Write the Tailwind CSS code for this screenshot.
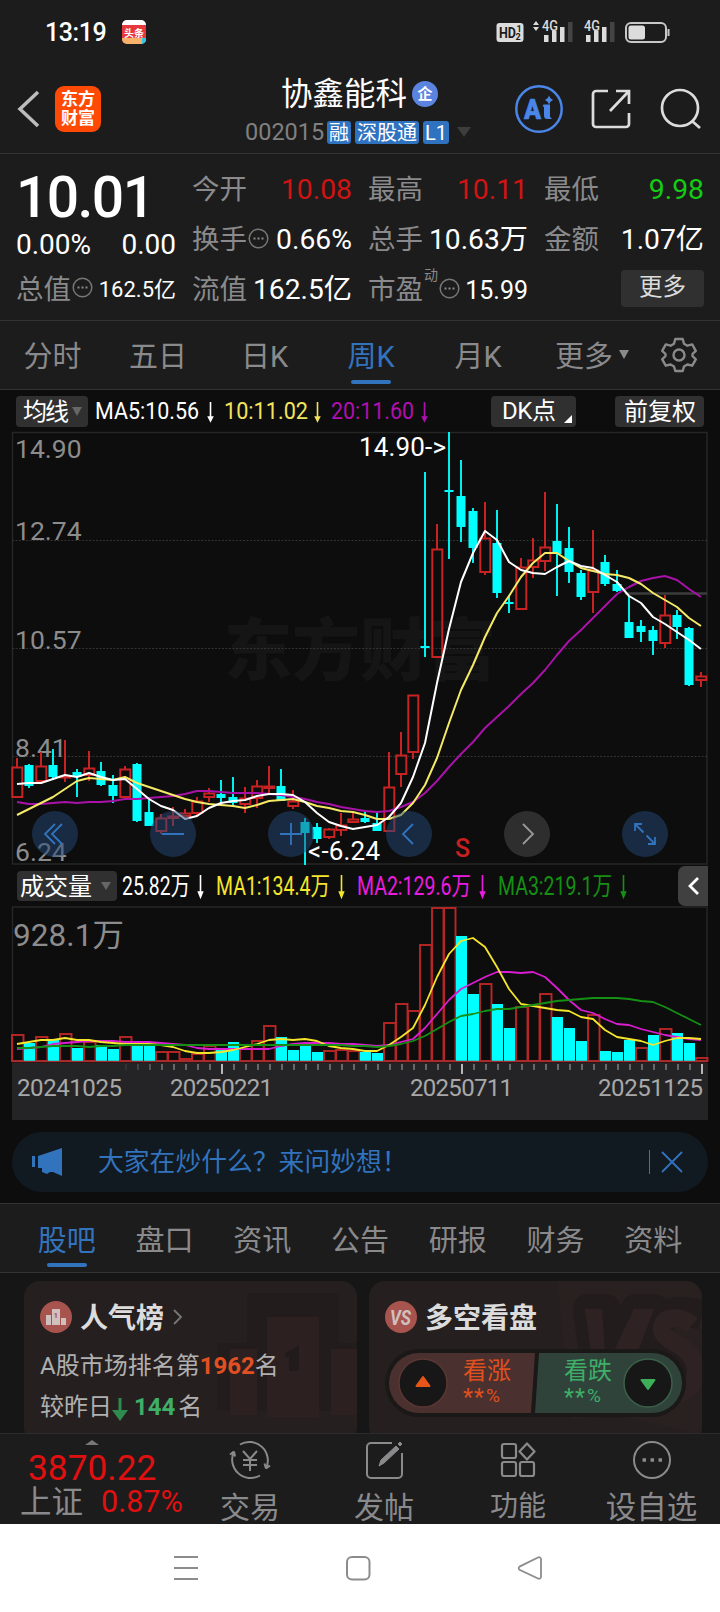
<!DOCTYPE html>
<html lang="zh-CN">
<head>
    <meta charset="UTF-8">
    <meta name="viewport" content="width=device-width, initial-scale=1.0">
    <title>协鑫能科 002015</title>
    <script src="https://cdn.jsdelivr.net/npm/@tailwindcss/browser@4"></script>
</head>
<body class="w-[720px] h-[1612px] overflow-hidden bg-[#0d0d0d] text-white font-['Roboto','Noto_Sans_CJK_SC',sans-serif]">
<div class="flex flex-col h-[1612px]">

    <!-- Statusleiste -->
    <div class="h-16 shrink-0 bg-[#1c1c1c] flex items-center pl-[45px] pr-[49px]">
        <span class="text-[25px] leading-none font-medium w-[63px] tracking-[-0.4px] pt-px">13:19</span>
        <svg class="ml-[14px]" width="24" height="24" viewBox="0 0 24 24">
            <rect width="24" height="24" rx="5" fill="#e8383d"/>
            <path d="M0 5a5 5 0 0 1 5-5h14a5 5 0 0 1 5 5z" fill="#fff"/>
            <path d="M0 18h24v1a5 5 0 0 1-5 5H5a5 5 0 0 1-5-5z" fill="#f6b26b"/>
            <path d="M20 18h4v1a5 5 0 0 1-4 5z" fill="#34c3e8"/>
            <text x="2" y="16.5" font-size="10" font-weight="700" fill="#fff">头条</text>
        </svg>
        <svg class="ml-auto" width="175" height="30" viewBox="497 17 175 30">
            <rect x="497.500" y="23" width="27" height="19" rx="3" fill="#dcdcdc"/>
            <text x="500" y="38" font-size="14" font-weight="700" fill="#1c1c1c" textLength="17" lengthAdjust="spacingAndGlyphs">HD</text>
            <text x="517.500" y="32" font-size="9" font-weight="700" fill="#1c1c1c">1</text>
            <text x="516.500" y="40" font-size="9" font-weight="700" fill="#1c1c1c">2</text>
            <path d="M534 25l3-4 3 4zM534 27l3 4 3-4z" fill="#dcdcdc"/>
            <text x="543" y="31" font-size="14" font-weight="500" fill="#dcdcdc" textLength="16" lengthAdjust="spacingAndGlyphs">4G</text>
            <path d="M545 35h4.500v7h-4.500zM553 31h4.500v11h-4.500zM561 27h4.500v15h-4.500z" fill="#dcdcdc"/>
            <path d="M569 22h4.500v20h-4.500z" fill="#444"/>
            <text x="585" y="31" font-size="14" font-weight="500" fill="#dcdcdc" textLength="16" lengthAdjust="spacingAndGlyphs">4G</text>
            <path d="M587 35h4.500v7h-4.500zM595 31h4.500v11h-4.500zM603 27h4.500v15h-4.500z" fill="#dcdcdc"/>
            <path d="M611 22h4.500v20h-4.500z" fill="#444"/>
            <rect x="627" y="23" width="40" height="19" rx="5" fill="none" stroke="#c8c8c8" stroke-width="2"/>
            <rect x="629.500" y="25.500" width="16.500" height="14" rx="2.500" fill="#dcdcdc"/>
            <path d="M669.500 29v7" stroke="#c8c8c8" stroke-width="2"/>
        </svg>
    </div>

    <!-- Kopfzeile -->
    <div class="h-[90px] shrink-0 bg-[#1c1c1c] border-b border-[#333] flex">
        <div class="w-[245px] flex items-center pl-[17px]">
            <svg width="24" height="38" viewBox="0 0 24 38" fill="none" stroke="#bdbdbd" stroke-width="3.500"><path d="M21 2L3 19l18 17"/></svg>
            <div class="ml-[14px] size-[46px] rounded-[9px] bg-[#ff4a05] font-bold text-[17px] leading-[19px] flex flex-col items-center justify-center"><span>东方</span><span>财富</span></div>
        </div>
        <div class="w-[230px]">
            <div class="flex items-center pl-[36px] pt-[12px] h-[50px]">
                <span class="text-[31.5px] leading-none">协鑫能科</span>
                <span class="ml-[5px] mt-[-2px] size-[26px] rounded-full bg-[#5b84e0] text-[15px] font-bold flex items-center justify-center">企</span>
            </div>
            <div class="flex items-center h-[34px] leading-none pt-[3px]">
                <span class="text-[23.5px] text-[#808080] w-[82px]">002015</span>
                <span class="bg-[#2f72c0] rounded-[3px] w-[24px] h-[23px] text-[20px] flex items-center justify-center">融</span>
                <span class="ml-[4px] bg-[#2f72c0] rounded-[3px] w-[64px] h-[23px] text-[20px] flex items-center justify-center">深股通</span>
                <span class="ml-[4px] bg-[#2f72c0] rounded-[3px] w-[26px] h-[23px] text-[20px] flex items-center justify-center">L1</span>
                <svg class="ml-[8px] mt-[-2px]" width="14" height="10" viewBox="0 0 14 10"><path d="M0 0h14l-7 10z" fill="#3d3d3d"/></svg>
            </div>
        </div>
        <div class="flex-1 flex items-center pl-[40px]">
            <svg width="48" height="48" viewBox="0 0 48 48">
                <circle cx="24" cy="24" r="22.700" fill="none" stroke="#4a86e8" stroke-width="2.500"/>
                <text x="9" y="33.500" font-size="28" font-weight="900" fill="#4a86e8" stroke="#4a86e8" stroke-width=".6" textLength="17" lengthAdjust="spacingAndGlyphs">A</text>
                <path d="M28.500 19.500h6.500v11.500q0 2 1.500 2v1h-4q-3.500 0-3.500-3.500v-7.500q0-2-1.500-2z" fill="#4a86e8"/>
                <path d="M34 10.500q.8 3.500 4 4.500-3.200 1-4 4.500-.8-3.500-4-4.500 3.200-1 4-4.500z" fill="#4a86e8"/>
            </svg>
            <svg class="ml-[28px]" width="41" height="40" viewBox="0 0 41 40" fill="none" stroke="#dcdcdc" stroke-width="2.700">
                <path d="M17 2H5a3 3 0 0 0-3 3v30a3 3 0 0 0 3 3h30a3 3 0 0 0 3-3V24M25 2h13v13M38 2L19 22"/>
            </svg>
            <svg class="ml-[28px]" width="42" height="42" viewBox="0 0 42 42" fill="none" stroke="#dcdcdc" stroke-width="2.700">
                <circle cx="20" cy="20" r="18"/><path d="M32 33l8 7"/>
            </svg>
        </div>
    </div>

    <!-- Kursdaten -->
    <div class="h-[167px] shrink-0 bg-[#1c1c1c] border-b border-[#333] px-4 grid grid-cols-4 gap-x-4 text-[27.5px] leading-none">
        <div class="flex flex-col">
            <div class="h-[67px] pt-[15px] text-[57px] font-medium tracking-[-1.6px]">10.01</div>
            <div class="h-[44px] flex items-center justify-between pt-[3px] text-[28px]"><span>0.00%</span><span>0.00</span></div>
            <div class="h-[50px] flex items-center text-[#8a8a8c] pb-px">总值
                <svg class="shrink-0 ml-[1px] mt-[-4px]" width="21" height="21" viewBox="0 0 21 21"><circle cx="10.500" cy="10.500" r="9.300" fill="none" stroke="#777" stroke-width="1.500"/><path d="M5.500 10.500h2M9.500 10.500h2M13.500 10.500h2" stroke="#888" stroke-width="2"/></svg>
                <span class="ml-auto text-white text-[22px]">162.5亿</span></div>
        </div>
        <div class="flex flex-col text-[#8a8a8c] pt-[11px]">
            <div class="h-[50px] flex items-center justify-between">今开<span class="text-[#d01414] text-[28.3px]">10.08</span></div>
            <div class="h-[50px] flex items-center">换手
                <svg class="shrink-0 ml-[1px] mt-[-4px]" width="21" height="21" viewBox="0 0 21 21"><circle cx="10.500" cy="10.500" r="9.300" fill="none" stroke="#777" stroke-width="1.500"/><path d="M5.500 10.500h2M9.500 10.500h2M13.500 10.500h2" stroke="#888" stroke-width="2"/></svg>
                <span class="ml-auto text-white text-[28.3px]">0.66%</span></div>
            <div class="h-[50px] flex items-center justify-between">流值<span class="text-white text-[28.2px]">162.5亿</span></div>
        </div>
        <div class="flex flex-col text-[#8a8a8c] pt-[11px]">
            <div class="h-[50px] flex items-center justify-between">最高<span class="text-[#d01414] text-[28.3px]">10.11</span></div>
            <div class="h-[50px] flex items-center justify-between">总手<span class="text-white text-[28.2px]">10.63万</span></div>
            <div class="h-[50px] flex items-center">市盈<span class="text-[14px] self-start mt-[3px] ml-[1px]">动</span>
                <svg class="shrink-0 ml-[1px] mt-[-4px]" width="21" height="21" viewBox="0 0 21 21"><circle cx="10.500" cy="10.500" r="9.300" fill="none" stroke="#777" stroke-width="1.500"/><path d="M5.500 10.500h2M9.500 10.500h2M13.500 10.500h2" stroke="#888" stroke-width="2"/></svg>
                <span class="ml-auto text-white text-[25px]">15.99</span></div>
        </div>
        <div class="flex flex-col text-[#8a8a8c] pt-[11px]">
            <div class="h-[50px] flex items-center justify-between">最低<span class="text-[#14cc14] text-[28.3px]">9.98</span></div>
            <div class="h-[50px] flex items-center justify-between">金额<span class="text-white text-[28.2px]">1.07亿</span></div>
            <div class="h-[50px] flex items-center justify-end pb-[4px]"><span class="w-[83px] h-[37px] rounded-[4px] bg-[#303030] text-[#dcdcdc] text-[23.5px] flex items-center justify-center">更多</span></div>
        </div>
    </div>

    <!-- Zeitraum -->
    <div class="h-[69px] shrink-0 bg-[#1c1c1c] border-b border-[#333] flex text-[29px] leading-none text-[#8a8a8c]">
        <div class="w-[105px] flex items-center justify-center pt-[4px]">分时</div>
        <div class="w-[106px] flex items-center justify-center pt-[4px]">五日</div>
        <div class="w-[107px] flex items-center justify-center pt-[4px]">日K</div>
        <div class="w-[106px] flex items-center justify-center pt-[4px] text-[#3273be] relative">周K<span class="absolute bottom-[5px] w-[40px] h-[4px] rounded-full bg-[#3273be]"></span></div>
        <div class="w-[108px] flex items-center justify-center pt-[4px]">月K</div>
        <div class="flex items-center pl-[23px] pt-[4px]">更多<svg class="ml-[6px] mt-[-6px]" width="10" height="9" viewBox="0 0 10 9"><path d="M0 0h10l-5 9z" fill="#8a8a8c"/></svg></div>
        <svg class="ml-auto mr-[23px] self-center" width="36" height="36" viewBox="0 0 36 36" fill="none" stroke="#8a8a8c" stroke-width="2.400" stroke-linejoin="round">
            <path d="M14.300 2h7.400l1.300 4.700 3.400 2 4.800-1.300 3.600 6.400L31.500 17v2l3.300 3.400-3.600 6.300-4.800-1.200-3.400 2-1.300 4.500h-7.400L13 29.500l-3.400-2-4.800 1.200-3.600-6.300L4.500 19v-2l-3.300-3.200 3.600-6.400 4.800 1.300 3.400-2z"/>
            <circle cx="18" cy="18" r="5.500"/>
        </svg>
    </div>

    <!-- K-Linien -->
    <svg class="shrink-0 block" width="720" height="475" viewBox="0 390 720 475">
        <g font-size="24">
            <rect x="16" y="396" width="72" height="31" rx="4" fill="#303030"/>
            <text x="23" y="420" fill="#fff" textLength="46">均线</text>
            <path d="M72 407h10l-5 9z" fill="#666"/>
            <text x="95" y="419" font-size="23" fill="#fff" textLength="104" lengthAdjust="spacingAndGlyphs">MA5:10.56</text>
            <text x="224" y="419" font-size="23" fill="#f2e35c" textLength="84" lengthAdjust="spacingAndGlyphs">10:11.02</text>
            <text x="331" y="419" font-size="23" fill="#b010b0" textLength="83" lengthAdjust="spacingAndGlyphs">20:11.60</text>
            <path d="M210.500 402v16m-2-1h4l-2 4z" stroke="#fff" stroke-width="1.600" fill="#fff"/>
            <path d="M317.500 402v16m-2-1h4l-2 4z" stroke="#f2e35c" stroke-width="1.600" fill="#f2e35c"/>
            <path d="M424.500 402v16m-2-1h4l-2 4z" stroke="#b010b0" stroke-width="1.600" fill="#b010b0"/>
            <rect x="491" y="396" width="85" height="31" rx="4" fill="#303030"/>
            <text x="502" y="419" fill="#fff" textLength="54">DK点</text>
            <path d="M572 415v8h-8z" fill="#fff"/>
            <rect x="615" y="396" width="89" height="31" rx="4" fill="#303030"/>
            <text x="624" y="420" fill="#fff" textLength="72">前复权</text>
        </g>
        <text x="224" y="675" font-size="68" font-weight="900" fill="#151515">东方财富</text>
        <path d="M12.500 432.500h694.500v431.500h-694.500z" fill="none" stroke="#262626" stroke-width="1.500"/>
        <path d="M12 540.500h695M12 648.500h695M12 756.500h695" stroke="#333" stroke-dasharray="2 1.500"/>
        <path d="M625 593.500h82" stroke="#3c3c3c" stroke-width="2.500"/>
        <g font-size="26.500" fill="#8c8c8c">
            <text x="15" y="458">14.90</text>
            <text x="15" y="540">12.74</text>
            <text x="15" y="649">10.57</text>
            <text x="15" y="757">8.41</text>
            <text x="15" y="861">6.24</text>
        </g>
        <g id="candles"></g>
        <g id="priceLines" fill="none" stroke-width="2" stroke-linejoin="round"></g>
        <g fill="#234a78" fill-opacity=".5">
            <circle cx="55" cy="834" r="23"/><circle cx="173" cy="834" r="23"/><circle cx="291" cy="834" r="23"/><circle cx="409" cy="834" r="23"/><circle cx="645" cy="834" r="23"/>
            <circle cx="527" cy="834" r="23" fill="#505050"/>
        </g>
        <g fill="none" stroke="#3273be" stroke-width="1.800">
            <path d="M55 824l-10 10 10 10M62 824l-10 10 10 10M162 834h22M280 834h22M291 823v22M413 824l-10 10 10 10"/>
            <path d="M635 831v-7h7M635.500 824.500l8 8M655 837v7h-7M654.500 843.500l-8-8"/>
            <path d="M523 824l10 10-10 10" stroke="#999"/>
        </g>
        <text x="359" y="456" font-size="26" fill="#fff" textLength="87">14.90-&gt;</text>
        <text x="308" y="860" font-size="26" fill="#fff" textLength="72">&lt;-6.24</text>
        <text x="455" y="857" font-size="25" font-weight="500" fill="#c82020">S</text>
    </svg>

    <!-- Volumen -->
    <svg class="shrink-0 block" width="720" height="267" viewBox="0 865 720 267">
        <rect x="17" y="871" width="100" height="30" rx="4" fill="#303030"/>
        <text x="20" y="895" font-size="24" fill="#fff" textLength="72">成交量</text>
        <path d="M101 882h10l-5 8z" fill="#666"/>
        <g font-size="25">
            <text x="122" y="895" fill="#fff" textLength="68" lengthAdjust="spacingAndGlyphs">25.82万</text>
            <text x="216" y="895" fill="#f5e62c" textLength="114" lengthAdjust="spacingAndGlyphs">MA1:134.4万</text>
            <text x="357" y="895" fill="#ea1ce0" textLength="114" lengthAdjust="spacingAndGlyphs">MA2:129.6万</text>
            <text x="498" y="895" fill="#159015" textLength="114" lengthAdjust="spacingAndGlyphs">MA3:219.1万</text>
        </g>
        <path d="M200.500 875v18m-2-1h4l-2 5z" stroke="#fff" stroke-width="1.600" fill="#fff"/>
        <path d="M341.500 875v18m-2-1h4l-2 5z" stroke="#f5e62c" stroke-width="1.600" fill="#f5e62c"/>
        <path d="M482.500 875v18m-2-1h4l-2 5z" stroke="#ea1ce0" stroke-width="1.600" fill="#ea1ce0"/>
        <path d="M623.500 875v18m-2-1h4l-2 5z" stroke="#159015" stroke-width="1.600" fill="#159015"/>
        <path d="M708 866h-23a7 7 0 0 0-7 7v26a7 7 0 0 0 7 7h23z" fill="#404040"/>
        <path d="M698 878l-8 8 8 8" fill="none" stroke="#fff" stroke-width="2.800"/>
        <path d="M12.500 1062v-155h694.500v155" fill="none" stroke="#262626" stroke-width="1.500"/>
        <text x="13" y="946" font-size="31.500" fill="#8c8c8c" textLength="111">928.1万</text>
        <g id="volumes"></g>
        <path d="M12 1061.500h695" stroke="#a03030" stroke-width="1.500"/>
        <g id="volumeLines" fill="none" stroke-width="1.800" stroke-linejoin="round"></g>
        <rect x="12" y="1063" width="696" height="57" fill="#242426"/>
        <g id="ticks" stroke-width="1.800"></g>
        <g font-size="24" fill="#a8a8a8">
            <text x="17" y="1096" textLength="105">20241025</text>
            <text x="170" y="1096" textLength="103">20250221</text>
            <text x="410" y="1096" textLength="103">20250711</text>
            <text x="598" y="1096" textLength="105">20251125</text>
        </g>
    </svg>

    <!-- Hinweis -->
    <div class="h-[60px] shrink-0 mx-3 rounded-full bg-[#111921] text-[#3273be] flex items-center pl-[20px] pr-[25px]">
        <svg width="31" height="28" viewBox="0 0 31 28" fill="#3273be"><path d="M0 8h3v11H0zM6 8L30 0v28l-9-4h-3l-3 2-5-2v-4H6z"/></svg>
        <span class="ml-[35px] pt-[2px] text-[25.8px] leading-none">大家在炒什么？来问妙想！</span>
        <span class="ml-auto w-px h-[24px] bg-[#3273be]"></span>
        <svg class="ml-[11px]" width="22" height="22" viewBox="0 0 22 22" stroke="#3273be" stroke-width="1.800"><path d="M1 1l20 20M21 1L1 21"/></svg>
    </div>

    <!-- Reiter -->
    <div class="mt-[11px] h-[70px] shrink-0 bg-[#1c1c1c] border-y border-[#333] px-[18px] flex text-[29px] leading-none text-[#8a8a8c]">
        <div class="flex-1 flex items-center justify-center pt-[6px] text-[#3273be] relative">股吧<span class="absolute bottom-[5px] w-[40px] h-[4px] rounded-full bg-[#3273be]"></span></div>
        <div class="flex-1 flex items-center justify-center pt-[6px]">盘口</div>
        <div class="flex-1 flex items-center justify-center pt-[6px]">资讯</div>
        <div class="flex-1 flex items-center justify-center pt-[6px]">公告</div>
        <div class="flex-1 flex items-center justify-center pt-[6px]">研报</div>
        <div class="flex-1 flex items-center justify-center pt-[6px]">财务</div>
        <div class="flex-1 flex items-center justify-center pt-[6px]">资料</div>
    </div>

    <!-- Karten -->
    <div class="h-[160px] shrink-0 bg-[#161617] overflow-hidden flex gap-3 pl-[24px] pt-[8px]">
        <div class="w-[333px] h-[162px] shrink-0 rounded-[16px] bg-[#261f1f] relative overflow-hidden">
            <svg class="absolute right-0 top-0" width="180" height="152" viewBox="0 0 180 152">
                <path d="M70 12h92v50h18v68H40V62h30z" fill="#221c1d"/><path d="M90 36h52v100H90zM53 68h27v66H53zM154 68h26v66h-26z" fill="#2c2020"/>
                <path d="M108 72l14-8v26h-10V76h-4z" fill="#221b1c"/>
            </svg>
            <div class="relative pl-[16px] pt-[20px]">
                <div class="flex items-center h-[32px]">
                    <svg width="32" height="32" viewBox="0 0 32 32"><circle cx="16" cy="16" r="16" fill="#a8544e"/><path d="M6 14h5v10H6zM12 8h8v16h-8zM21 17h5v7h-5z" fill="#d0c0be"/><text x="13.500" y="17" font-size="8" font-weight="700" fill="#a8544e">1</text></svg>
                    <span class="ml-[8px] pt-[3px] text-[28px] leading-none font-bold text-[#dcdcdc]">人气榜</span>
                    <svg class="ml-[9px]" width="10" height="16" viewBox="0 0 10 16" fill="none" stroke="#777" stroke-width="1.800"><path d="M1 1l7 7-7 7"/></svg>
                </div>
                <div class="mt-[15px] h-[36px] flex items-center text-[24px] leading-none text-[#b0b0b0]">A股市场排名第<span class="font-bold text-[#e25022]">1962</span>名</div>
                <div class="mt-[5px] h-[36px] flex items-center text-[24px] leading-none text-[#b0b0b0]">较昨日<svg class="mt-[4px]" width="16" height="23" viewBox="0 0 16 23"><path d="M6.500 0h3v12H16l-8 11-8-11h6.500z" fill="#2f8a50"/></svg><span class="ml-[6px] font-bold text-[#3fae68]">144</span><span class="ml-[3px]">名</span></div>
            </div>
        </div>
        <div class="w-[333px] h-[162px] shrink-0 rounded-[16px] bg-[#261f1f] relative overflow-hidden">
            <svg class="absolute right-0 top-0" width="160" height="152" viewBox="0 0 160 152">
                <path d="M15 0h145v152h-10L60 130 30 140z" fill="#292020"/>
                <g stroke="#231c1d" stroke-width="30" stroke-linejoin="round" fill="none"><path d="M46 28h18l6 60 24-60h18L78 122H58zM160 34q-42-12-48 22 0 16 48 34"/></g>
                <path d="M43 28h17l4 58 28-58h20L76 124H56z" fill="#2f2222"/>
                <path d="M150 44q-12-10-26-5-10 10 4 20 26 12 26 32-2 24-34 24" fill="none" stroke="#2f2222" stroke-width="18"/>
            </svg>
            <div class="relative pl-[16px] pt-[20px]">
                <div class="flex items-center h-[32px]">
                    <svg width="32" height="32" viewBox="0 0 32 32"><circle cx="16" cy="16" r="16" fill="#a8544e"/><text x="5" y="23.500" font-size="21" font-weight="700" font-style="italic" fill="#d0c0be" textLength="21" lengthAdjust="spacingAndGlyphs">VS</text></svg>
                    <span class="ml-[8px] pt-[3px] text-[28px] leading-none font-bold text-[#dcdcdc]">多空看盘</span>
                </div>
                <svg class="mt-[16px]" width="301" height="68" viewBox="0 0 301 68">
                    <rect width="301" height="68" rx="34" fill="#1b1818"/>
                    <path d="M34 4h116l-4 60H34a30 30 0 0 1 0-60z" fill="#4a302e"/>
                    <path d="M154 4h113a30 30 0 0 1 0 60H150z" fill="#30433a"/>
                    <circle cx="38" cy="34" r="24" fill="#171717" stroke="#5a3733" stroke-width="1.500"/>
                    <circle cx="263" cy="34" r="24" fill="#171717" stroke="#3a6048" stroke-width="1.500"/>
                    <path d="M38 28l6.500 9h-13z" fill="#e85518" stroke="#e85518" stroke-width="2" stroke-linejoin="round"/>
                    <path d="M263 40l6.500-9h-13z" fill="#3fae58" stroke="#3fae58" stroke-width="2" stroke-linejoin="round"/>
                    <g font-size="24" fill="#e0501e"><text x="78" y="30">看涨</text><text x="78" y="56" font-size="23" textLength="21">**</text><text x="101" y="53" font-size="19" textLength="14">%</text></g>
                    <g font-size="24" fill="#3fae68"><text x="179" y="30">看跌</text><text x="179" y="56" font-size="23" textLength="21">**</text><text x="202" y="53" font-size="19" textLength="14">%</text></g>
                </svg>
            </div>
        </div>
    </div>

    <!-- Fußleiste -->
    <div class="h-[91px] shrink-0 bg-[#1c1c1c] border-t border-[#2c2c2c] flex text-[#8a8a8c] leading-none">
        <div class="w-[183px]">
            <svg class="ml-[85px] mt-[6px]" width="14" height="5" viewBox="0 0 14 5"><path d="M0 5l7-5 7 5z" fill="#777"/></svg>
            <div class="ml-[28px] mt-[6px] text-[35.300px] text-[#e01010]">3870.22</div>
            <div class="ml-[20px] flex items-center text-[31.500px]"><span class="pt-px">上证</span><span class="ml-[18px] text-[30.500px] text-[#e01010]">0.87%</span></div>
        </div>
        <div class="w-[134px] flex flex-col items-center pt-[6px] text-[30px]">
            <svg width="44" height="40" viewBox="0 0 44 40" fill="none" stroke="#8a8a8c" stroke-width="2">
                <path d="M12 4.500a18.500 18.500 0 0 1 26 24M38 28.500l4-3M38 28.500l-1.500-5M32 35.500a18.500 18.500 0 0 1-26-24M6 11.500l-4 3M6 11.500l1 5"/>
                <path d="M15 11l7 8 7-8M22 19v12M15 20h14M15 25h14"/>
            </svg>
            <span class="mt-[13px]">交易</span>
        </div>
        <div class="w-[134px] flex flex-col items-center pt-[6px] text-[30px]">
            <svg width="38" height="40" viewBox="0 0 38 40" fill="none" stroke="#8a8a8c" stroke-width="2">
                <path d="M27 3H6a4 4 0 0 0-4 4v27a4 4 0 0 0 4 4h27a4 4 0 0 0 4-4V13"/>
                <path d="M14 26l2-6L31 6l3 3-15 14zM33 4l2-2 2 2-2 2z" fill="#8a8a8c" stroke-width="1"/>
            </svg>
            <span class="mt-[13px]">发帖</span>
        </div>
        <div class="w-[134px] flex flex-col items-center pt-[6px] text-[28px]">
            <svg width="36" height="40" viewBox="0 0 36 40" fill="none" stroke="#8a8a8c" stroke-width="2.200">
                <rect x="2" y="4" width="14" height="14" rx="2"/><rect x="2" y="22" width="14" height="14" rx="2"/><rect x="20" y="22" width="14" height="14" rx="2"/>
                <path d="M27 3.500l7.500 8L27 19.500l-7.500-8z" stroke-linejoin="round"/>
            </svg>
            <span class="mt-[13px]">功能</span>
        </div>
        <div class="flex-1 flex flex-col items-center pt-[6px] pr-[2px] text-[30.500px]">
            <svg width="40" height="40" viewBox="0 0 40 40" fill="none" stroke="#8a8a8c" stroke-width="2">
                <circle cx="20" cy="20" r="18"/><path d="M10.500 20h3.500M18.500 20h3.500M26.500 20h3.500" stroke-width="3.500"/>
            </svg>
            <span class="mt-[13px]">设自选</span>
        </div>
    </div>

    <!-- Systemnavigation -->
    <div class="flex-1 bg-white">
        <svg width="720" height="88" viewBox="0 0 720 88" fill="none" stroke="#8c8c8c" stroke-width="2">
            <path d="M174 33h24M174 44h24M174 55h24"/>
            <rect x="347" y="33" width="22.500" height="22.500" rx="5"/>
            <path d="M538 33.500a2 2 0 0 1 3 1.500v18a2 2 0 0 1-3 1.500l-18.500-8.700a2 2 0 0 1 0-3.200z" stroke-width="1.800"/>
        </svg>
    </div>
</div>

<script>
    // [Farbe, Hoch, Körper oben, Körper unten, Tief]
    const candles = [
        ['r',758,767,797,798],['c',764,765,786,788],['r',752,766,781,784],['c',749,765,777,780],['r',740,776,777,782],['c',769,772,777,797],
        ['r',751,768,775,781],['c',762,771,785,786],['c',775,785,796,803],['r',766,769,797,799],['c',763,764,821,822],['c',800,812,826,826],
        ['r',814,818,831,834],['r',807,816,818,826],['r',809,813,816,818],['r',797,801,813,817],['r',788,793,797,802],['c',780,794,798,803],
        ['c',777,797,803,807],['r',787,798,804,813],['r',780,786,798,808],['r',766,786,788,793],['c',769,786,801,801],['r',790,801,806,809],
        ['c',818,822,833,865],['c',823,827,839,843],['r',828,829,837,839],['r',813,825,830,836],['r',813,819,822,823],['c',812,818,822,823],
        ['c',813,823,831,831],['r',752,787,831,831],['r',732,755,774,787],['r',695,695,752,759],['c',472,646,648,657],['r',524,549,657,657],
        ['c',432,490,492,559],['c',460,496,527,542],['c',508,511,548,563],['r',502,538,572,575],['c',510,543,593,598],['c',595,602,604,613],
        ['r',558,567,609,610],['r',538,560,567,578],['r',492,547,561,571],['c',504,541,554,596],['c',527,548,572,583],['c',570,573,597,600],
        ['r',530,570,592,613],['c',555,562,584,586],['c',570,584,591,592],['c',596,622,638,638],['c',620,626,632,642],['c',626,630,641,655],
        ['r',595,615,643,648],['c',610,615,627,639],['c',627,628,685,686],['r',672,676,680,687]
    ];
    const ma5 = [784,783,783,779,775,777,773,777,780,779,789,799,806,810,819,816,808,803,801,800,796,794,794,795,802,813,822,826,829,827,825,817,803,777,743,683,629,582,553,531,540,562,570,573,574,567,561,566,568,575,582,596,603,617,624,632,640,649];
    const ma10 = [815,809,803,797,789,781,778,779,780,777,783,787,791,795,799,802,804,805,806,808,805,801,800,799,802,806,808,811,812,815,819,819,815,803,785,758,723,690,665,637,613,596,577,563,553,553,561,568,571,574,575,578,584,593,600,607,618,626];
    const ma20 = [802,804,804,803,802,803,802,802,801,799,799,798,797,796,794,791,791,792,793,793,793,794,795,797,799,802,804,807,809,811,812,811,807,802,793,781,767,754,742,728,717,706,694,683,670,655,641,630,618,606,594,587,581,578,576,580,589,597];

    const volumes = [
        'r1035','c1043','r1037','c1040','r1034','c1048','r1042','c1045','c1049','r1037','c1046','c1046','r1052','r1052','r1059','r1054','r1046','c1049','c1042','r1049',
        'r1041','r1026','c1037','c1050','c1043','c1052','r1051','r1050','r1051','c1052','c1053','r1023','r1004','r1011','r945','r908','r908','c936','c994','r984',
        'c1004','c1028','r1007','r1006','r994','c1017','c1028','c1041','r1015','c1051','c1052','c1040','r1048','c1035','r1029','c1033','c1043','r1058'
    ];
    const vol1 = [1044,1042,1040,1040,1038,1040,1040,1042,1043,1044,1044,1044,1045,1047,1051,1053,1053,1052,1050,1047,1044,1040,1039,1040,1039,1041,1046,1048,1049,1051,1051,1045,1037,1028,1005,977,954,941,938,947,967,989,1004,1006,1008,1010,1011,1017,1019,1030,1037,1039,1041,1045,1041,1038,1038,1039];
    const vol2 = [1049,1048,1047,1044,1043,1042,1041,1041,1041,1042,1042,1042,1043,1044,1045,1048,1049,1049,1049,1049,1049,1049,1046,1044,1043,1043,1043,1044,1044,1045,1046,1045,1042,1039,1028,1014,1000,989,983,977,972,972,973,972,977,988,1000,1010,1013,1019,1024,1025,1029,1032,1035,1037,1039,1040];
    const vol3 = [1048,1048,1047,1046,1046,1046,1047,1046,1046,1045,1045,1045,1045,1045,1045,1045,1045,1045,1045,1045,1045,1045,1045,1045,1045,1045,1045,1045,1046,1046,1047,1046,1044,1041,1036,1029,1022,1016,1014,1011,1009,1009,1007,1005,1003,1001,1000,999,998,998,998,999,1001,1002,1007,1013,1019,1025];

    const cx = i => 17 + 12 * i;
    const line = (data, color) => `<polyline stroke="${color}" points="${data.map((y, i) => cx(i) + ',' + y).join(' ')}"/>`;

    document.getElementById('candles').innerHTML = candles.map(([c, hi, top, bot, lo], i) => {
        const x = cx(i);
        if (c === 'c') {
            return `<path d="M${x} ${hi}V${lo}" stroke="#00f0f0" stroke-width="2"/><rect x="${x - 4.5}" y="${top}" width="9" height="${bot - top}" fill="#00ffff"/>`;
        }
        return `<path d="M${x} ${hi}V${top}M${x} ${bot}V${lo}" stroke="#c82222" stroke-width="2"/><rect x="${x - 4.7}" y="${top + 0.5}" width="10" height="${Math.max(bot - top - 0.5, 1)}" fill="none" stroke="#c82222" stroke-width="2"/>`;
    }).join('');
    document.getElementById('priceLines').innerHTML = line(ma20, '#a912a9') + line(ma10, '#f5ea66') + line(ma5, '#ffffff');

    document.getElementById('volumes').innerHTML = volumes.map((v, i) => {
        const x = cx(i), y = +v.slice(1);
        return v[0] === 'c'
            ? `<rect x="${x - 5}" y="${y}" width="11" height="${1061 - y}" fill="#00ffff"/>`
            : `<rect x="${x - 5}" y="${y}" width="11.5" height="${1061 - y}" fill="none" stroke="#b92626" stroke-width="1.9"/>`;
    }).join('');
    document.getElementById('volumeLines').innerHTML = line(vol2, '#dc1cd2') + line(vol1, '#f5e62c') + line(vol3, '#159015');

    let ticks = '';
    for (let k = 0; k < 49; k++) {
        const x = 126 + 12 * k, long = x === 222 || x === 462 || x === 702;
        ticks += `<path d="M${x} 1064v${long ? 10 : 6}" stroke="${long ? '#c8c8c8' : '#707070'}" opacity="${Math.min(1, 0.2 + k * 0.25)}"/>`;
    }
    document.getElementById('ticks').innerHTML = ticks;
</script>
</body>
</html>
